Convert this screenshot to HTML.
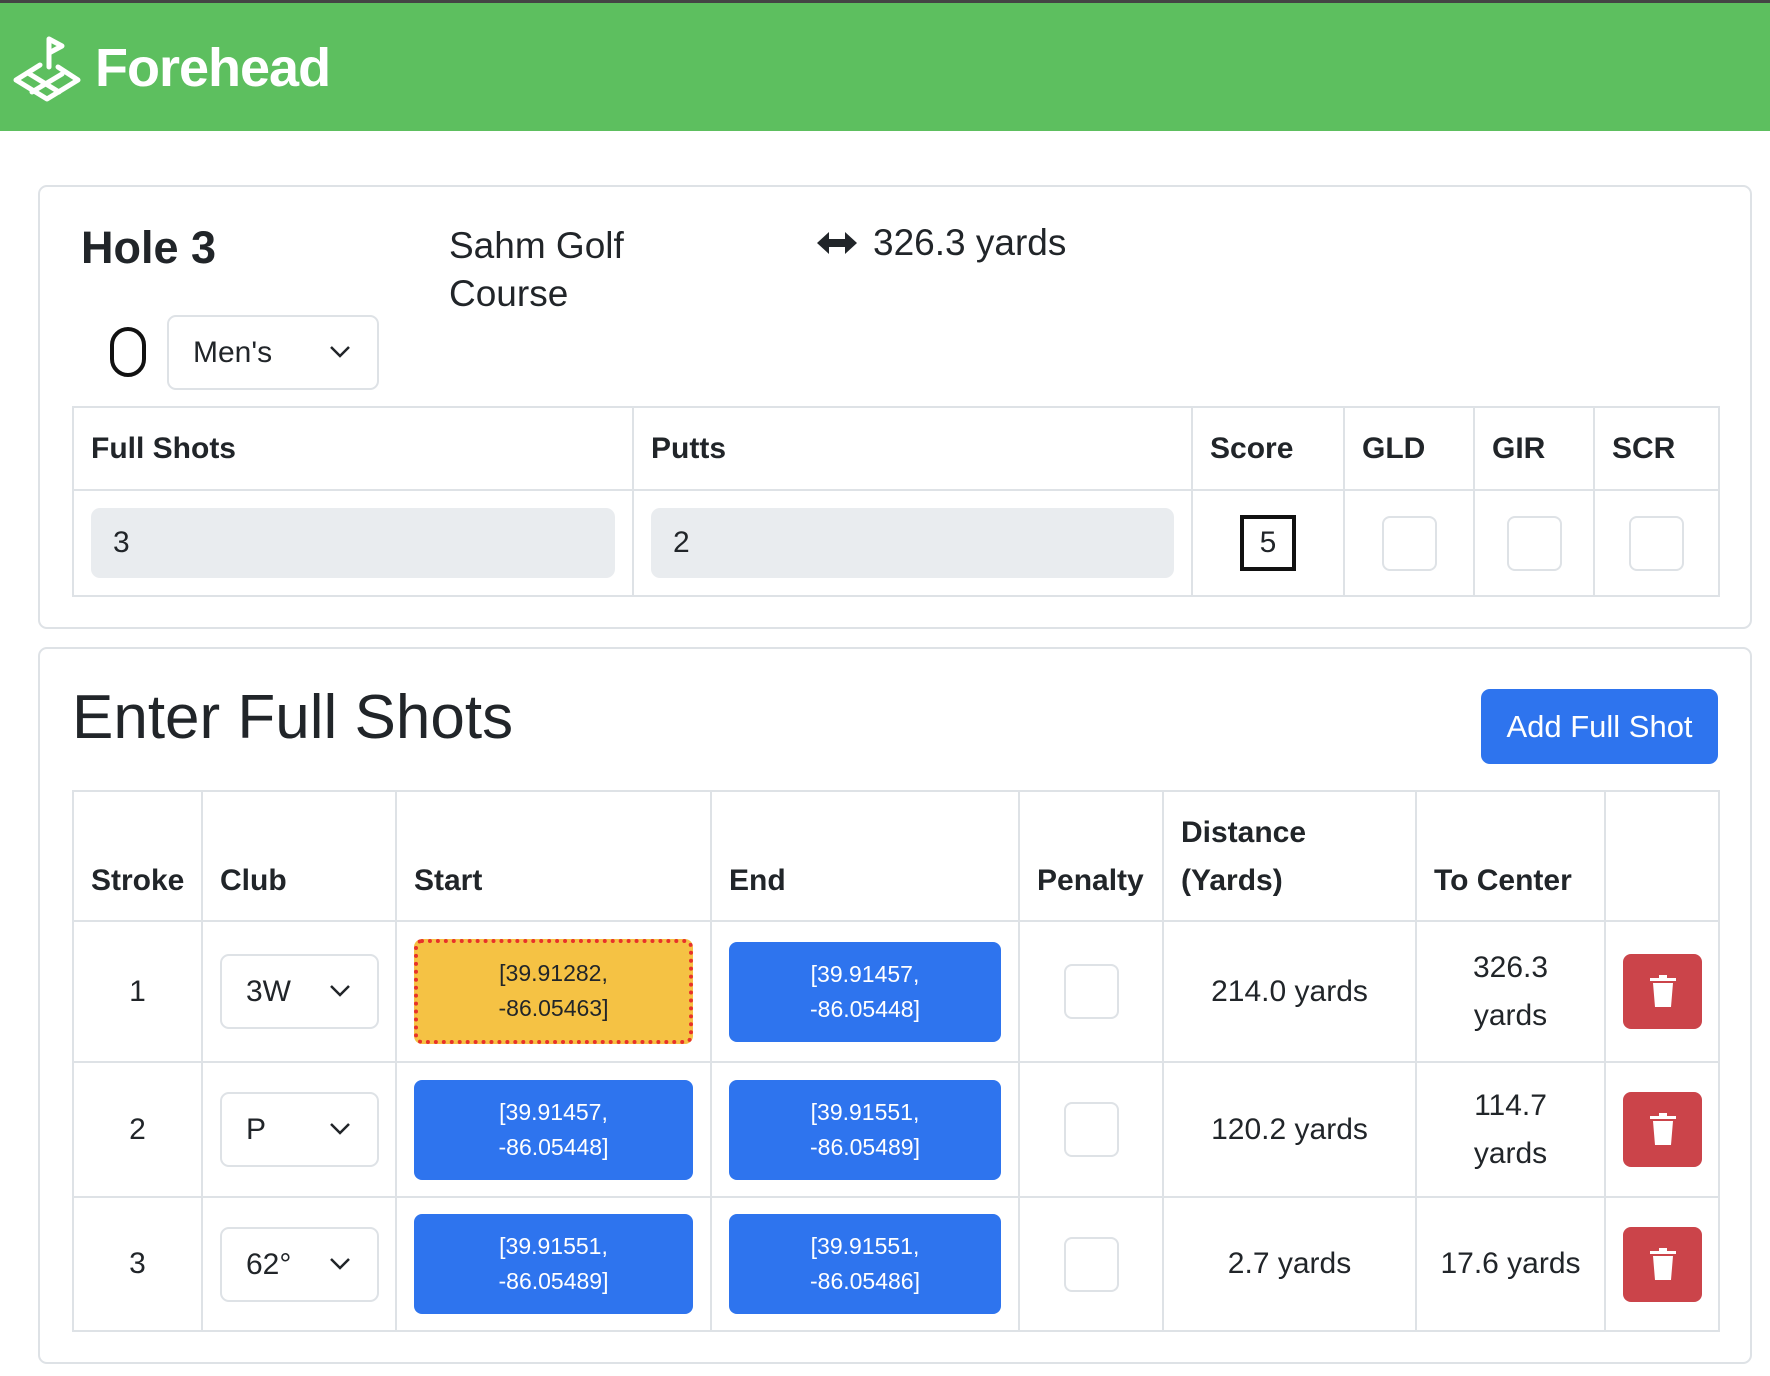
<!DOCTYPE html>
<html><head><meta charset="utf-8"><style>
*{box-sizing:border-box;margin:0;padding:0}
body{width:1770px;height:1376px;background:#fff;font-family:"Liberation Sans",sans-serif;color:#212529;position:relative;overflow:hidden}
.hdr{position:absolute;left:0;top:0;width:1770px;height:131px;background:#5dbf5f;border-top:3px solid #444}
.brand{position:absolute;left:95px;top:34px;font-size:54px;font-weight:bold;color:#fff;letter-spacing:-1px}
.card{position:absolute;left:38px;width:1714px;border:2px solid #dee2e6;border-radius:9px;background:#fff}
.a{position:absolute}
table{position:absolute;border-collapse:collapse;table-layout:fixed}
td,th{border:2px solid #dee2e6;padding:0 17px;text-align:left;font-size:30px}
th{font-weight:bold;font-size:30px}
.inp{background:#e9ecef;border-radius:9px;height:70px;line-height:70px;padding-left:22px;font-size:30px}
.chk{width:55px;height:55px;border:2px solid #dee2e6;border-radius:8px;margin:0 auto}
.sel{width:159px;height:75px;border:2px solid #dee2e6;border-radius:9px;position:relative;font-size:30px;line-height:71px;padding-left:24px}
.sel svg{position:absolute;right:26px;top:28px}
.btn{height:100px;border-radius:8px;background:#2e74ee;color:#fff;text-align:center;font-size:23px;line-height:35px;padding-top:15px}
.tr{width:79px;height:75px;border-radius:8px;background:#cb444a;position:relative}
.tr svg{position:absolute;left:27px;top:21px}
.c{text-align:center}
</style></head><body>
<div class="hdr">
<svg class="a" style="left:12px;top:30px" width="72" height="72" viewBox="0 0 72 72">
<g fill="none" stroke="#fff" stroke-width="5" stroke-linecap="round" stroke-linejoin="round">
<path d="M37 6 V34 M37 6 L50 13 L37 20"/>
<path d="M28 32 L4 47 L35 66 L66 47 L46 34"/>
<path d="M16 40 L47 59 M50 41 L20 59"/>
</g></svg>
<div class="brand">Forehead</div>
</div>

<div class="card" style="top:185px;height:444px"></div>
<div class="a" style="left:81px;top:222px;font-size:45px;font-weight:bold">Hole 3</div>
<div class="a" style="left:449px;top:222px;font-size:37px;line-height:48px">Sahm Golf<br>Course</div>
<svg class="a" style="left:817px;top:232px" width="40" height="22" viewBox="0 0 40 22"><path d="M0 11 L12 0 V7 H28 V0 L40 11 L28 22 V15 H12 V22Z" fill="#212529"/></svg>
<div class="a" style="left:873px;top:222px;font-size:37px">326.3 yards</div>
<div class="a" style="left:110px;top:327px;width:36px;height:50px;border:4px solid #111;border-radius:18px"></div>
<div class="a sel" style="left:167px;top:315px;width:212px;height:75px">Men's<svg width="22" height="14" viewBox="0 0 22 14"><path d="M2 2 L11 11 L20 2" fill="none" stroke="#212529" stroke-width="2.5"/></svg></div>

<table style="left:72px;top:406px;width:1646px">
<colgroup><col style="width:560px"><col style="width:559px"><col style="width:152px"><col style="width:130px"><col style="width:120px"><col style="width:125px"></colgroup>
<tr style="height:83px"><th>Full Shots</th><th>Putts</th><th>Score</th><th>GLD</th><th>GIR</th><th>SCR</th></tr>
<tr style="height:106px"><td><div class="inp">3</div></td><td><div class="inp">2</div></td>
<td><div style="width:56px;height:56px;border:4px solid #111;margin:0 auto;text-align:center;line-height:48px;font-size:30px">5</div></td>
<td><div class="chk"></div></td><td><div class="chk"></div></td><td><div class="chk"></div></td></tr>
</table>

<div class="card" style="top:647px;height:717px"></div>
<div class="a" style="left:72px;top:682px;font-size:62px">Enter Full Shots</div>
<div class="a" style="left:1481px;top:689px;width:237px;height:75px;background:#2e74ee;border-radius:9px;color:#fff;font-size:31px;line-height:75px;text-align:center">Add Full Shot</div>

<table style="left:72px;top:790px;width:1646px">
<colgroup><col style="width:129px"><col style="width:194px"><col style="width:315px"><col style="width:308px"><col style="width:144px"><col style="width:253px"><col style="width:189px"><col style="width:114px"></colgroup>
<tr style="height:130px;vertical-align:bottom"><th style="padding-bottom:22px">Stroke</th><th style="padding-bottom:22px">Club</th><th style="padding-bottom:22px">Start</th><th style="padding-bottom:22px">End</th><th style="padding-bottom:22px">Penalty</th><th style="padding-bottom:15px;line-height:48px">Distance<br>(Yards)</th><th style="padding-bottom:22px;white-space:nowrap">To Center</th><th></th></tr>
<tr style="height:141px"><td class="c">1</td><td><div class="sel">3W<svg width="22" height="14" viewBox="0 0 22 14"><path d="M2 2 L11 11 L20 2" fill="none" stroke="#212529" stroke-width="2.5"/></svg></div></td>
<td><div class="btn" style="background:#f5c244;color:#212529;border:4px dotted #e8322a;height:105px;padding-top:13px">[39.91282,<br>-86.05463]</div></td>
<td><div class="btn">[39.91457,<br>-86.05448]</div></td><td><div class="chk"></div></td>
<td class="c">214.0 yards</td><td class="c" style="line-height:48px">326.3<br>yards</td>
<td><div class="tr"><svg width="26" height="32" viewBox="0 0 26 32"><path d="M0 3 H26 V6 H0Z M9 0 H17 V3 H9Z M3 8 H23 L21 32 H5Z" fill="#fff"/></svg></div></td></tr>
<tr style="height:135px"><td class="c">2</td><td><div class="sel">P<svg width="22" height="14" viewBox="0 0 22 14"><path d="M2 2 L11 11 L20 2" fill="none" stroke="#212529" stroke-width="2.5"/></svg></div></td>
<td><div class="btn">[39.91457,<br>-86.05448]</div></td><td><div class="btn">[39.91551,<br>-86.05489]</div></td><td><div class="chk"></div></td>
<td class="c">120.2 yards</td><td class="c" style="line-height:48px">114.7<br>yards</td>
<td><div class="tr"><svg width="26" height="32" viewBox="0 0 26 32"><path d="M0 3 H26 V6 H0Z M9 0 H17 V3 H9Z M3 8 H23 L21 32 H5Z" fill="#fff"/></svg></div></td></tr>
<tr style="height:134px"><td class="c">3</td><td><div class="sel">62°<svg width="22" height="14" viewBox="0 0 22 14"><path d="M2 2 L11 11 L20 2" fill="none" stroke="#212529" stroke-width="2.5"/></svg></div></td>
<td><div class="btn">[39.91551,<br>-86.05489]</div></td><td><div class="btn">[39.91551,<br>-86.05486]</div></td><td><div class="chk"></div></td>
<td class="c">2.7 yards</td><td class="c" style="white-space:nowrap;padding:0 8px">17.6 yards</td>
<td><div class="tr"><svg width="26" height="32" viewBox="0 0 26 32"><path d="M0 3 H26 V6 H0Z M9 0 H17 V3 H9Z M3 8 H23 L21 32 H5Z" fill="#fff"/></svg></div></td></tr>
</table>
</body></html>
